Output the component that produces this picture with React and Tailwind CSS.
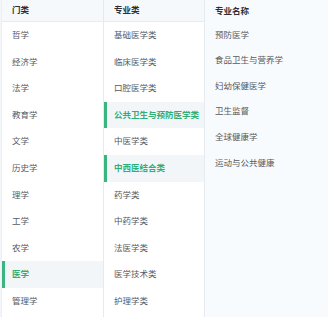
import React, { useState } from "react";

const categories = [
  "哲学",
  "经济学",
  "法学",
  "教育学",
  "文学",
  "历史学",
  "理学",
  "工学",
  "农学",
  "医学",
  "管理学",
];

const subjects = [
  "基础医学类",
  "临床医学类",
  "口腔医学类",
  "公共卫生与预防医学类",
  "中医学类",
  "中西医结合类",
  "药学类",
  "中药学类",
  "法医学类",
  "医学技术类",
  "护理学类",
];

const majors = [
  "预防医学",
  "食品卫生与营养学",
  "妇幼保健医学",
  "卫生监督",
  "全球健康学",
  "运动与公共健康",
];

function Row({ label, active, highlight }) {
  return (
    <div
      className={`h-[26.6px] flex items-center border-l-[3px] ${
        active || highlight
          ? "border-[#3bb57f] bg-[#f2f6f9] text-[#2fae76] font-bold"
          : "border-transparent text-[#555a62]"
      }`}
    >
      <span className="pl-[7px]">{label}</span>
    </div>
  );
}

export default function App() {
  const [category, setCategory] = useState("医学");

  return (
    <div
      className="w-[328px] h-[317px] overflow-hidden flex bg-white text-[8.5px] leading-none"
      style={{ fontFamily: '"Noto Sans", "Noto Sans CJK SC", sans-serif' }}
    >
      <div className="w-[2px] bg-[#f3f6f9] border-r border-[#eceff3]" />
      <div className="w-[102px] flex flex-col border-r border-[#e6eaef]">
        <div className="h-[22px] shrink-0 flex items-center pl-[10px] bg-[#f6f9fc] border-b border-[#e8ecf0] font-bold text-[#2b2f36]">
          门类
        </div>
        {categories.map((c) => (
          <div key={c} onClick={() => setCategory(c)} className="cursor-pointer">
            <Row label={c} active={c === category} />
          </div>
        ))}
      </div>
      <div className="w-[101px] flex flex-col border-r border-[#e6eaef]">
        <div className="h-[22px] shrink-0 flex items-center pl-[10px] bg-[#f6f9fc] border-b border-[#e8ecf0] font-bold text-[#2b2f36]">
          专业类
        </div>
        {subjects.map((s) => (
          <Row
            key={s}
            label={s}
            highlight={s === "公共卫生与预防医学类" || s === "中西医结合类"}
          />
        ))}
      </div>
      <div className="flex-1 flex flex-col bg-[#f8fbfd]">
        <div className="h-[22px] shrink-0 flex items-center pl-[10px] font-bold text-[#2b2f36]">
          专业名称
        </div>
        {majors.map((m) => (
          <div key={m} className="h-[25.6px] flex items-center pl-[10px] text-[#555a62]">
            {m}
          </div>
        ))}
      </div>
    </div>
  );
}
